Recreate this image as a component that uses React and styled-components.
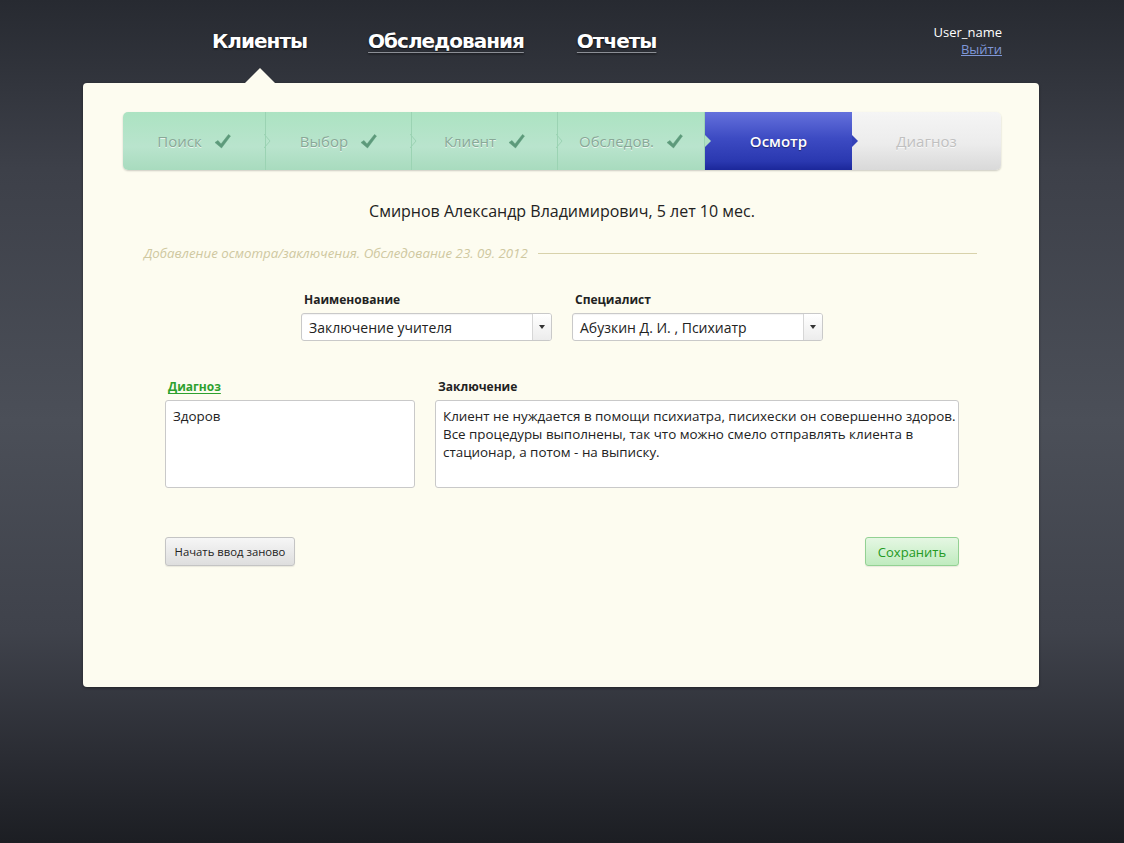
import React from 'react'
import styled, { createGlobalStyle } from 'styled-components'

const GlobalStyle = createGlobalStyle`
  html, body {
    margin: 0;
    padding: 0;
  }
  body {
    font-family: 'Open Sans', 'Noto Sans', sans-serif;
    background: #2a2d34;
  }
`

const Page = styled.div`
  width: 1124px;
  min-height: 843px;
  box-sizing: border-box;
  padding-left: 83px;
  background: linear-gradient(
    to bottom,
    #272a31 0%,
    #3d4049 20%,
    #4b4f58 50%,
    #3f424b 75%,
    #2a2c33 90%,
    #1c1e23 100%
  );
  display: flex;
  flex-direction: column;
`

const Header = styled.header`
  width: 956px;
  height: 83px;
  display: flex;
  align-items: flex-start;
`

const Nav = styled.nav`
  display: flex;
  padding: 29px 0 0 129px;
  flex: 1;
`

const NavLink = styled.a`
  font-family: 'DejaVu Sans', sans-serif;
  font-weight: bold;
  font-size: 20px;
  letter-spacing: -1px;
  margin-left: ${({ offset }) => offset || 0}px;
  color: #fff;
  text-shadow: 0 1px 2px rgba(0, 0, 0, 0.8);
  text-decoration: ${({ active }) => (active ? 'none' : 'underline')};
  text-decoration-color: #8c8f96;
  text-underline-offset: 4px;
  text-decoration-thickness: 1px;
  position: relative;
  cursor: pointer;
`

const Pointer = styled.span`
  position: absolute;
  left: 50%;
  top: 39px;
  margin-left: -15px;
  width: 0;
  height: 0;
  border-left: 15px solid transparent;
  border-right: 15px solid transparent;
  border-bottom: 15px solid #fdfcf0;
`

const User = styled.div`
  padding: 24px 37px 0 0;
  display: flex;
  flex-direction: column;
  align-items: flex-end;
  font-size: 13px;
  line-height: 17px;
  color: #fff;
`

const Logout = styled.a`
  color: #7f97d8;
  text-decoration: underline;
  cursor: pointer;
`

const Card = styled.main`
  width: 956px;
  height: 604px;
  box-sizing: border-box;
  background: #fdfcf0;
  border-radius: 4px;
  box-shadow: 0 1px 3px rgba(0, 0, 0, 0.4);
  padding: 29px 38px 0 40px;
  display: flex;
  flex-direction: column;
`

const Steps = styled.div`
  display: flex;
  height: 58px;
  border-radius: 5px;
  box-shadow: 0 1px 2px rgba(0, 0, 0, 0.2);
`

const stepBg = {
  done: 'linear-gradient(to bottom, #ace3c2 0%, #b9e4cd 60%, #a8dbbe 100%)',
  active: 'linear-gradient(to bottom, #6471dc 0%, #3d4bc3 45%, #2a38b0 85%, #1b279a 100%)',
  todo: 'linear-gradient(to bottom, #f5f5f5 0%, #ececec 55%, #d9d9d9 100%)',
}

const Step = styled.div`
  width: ${({ width }) => width}px;
  box-sizing: border-box;
  display: flex;
  align-items: center;
  justify-content: center;
  gap: 12px;
  position: relative;
  background: ${({ state }) => stepBg[state]};
  font-size: 15px;
  color: ${({ state }) =>
    state === 'done' ? '#89a897' : state === 'active' ? '#fff' : '#c0c0c0'};
  font-weight: ${({ state }) => (state === 'active' ? 600 : 400)};
  text-shadow: ${({ state }) =>
    state === 'active' ? '0 1px 1px rgba(0,0,0,0.4)' : '0 1px 0 rgba(255,255,255,0.7)'};
  border-right: ${({ state }) => (state === 'done' ? '1px solid #9bd3b3' : 'none')};

  &:first-child {
    border-radius: 5px 0 0 5px;
  }
  &:last-child {
    border-radius: 0 5px 5px 0;
  }
`

const Chevron = styled.svg`
  position: absolute;
  right: -6px;
  top: 22px;
  z-index: 2;
`

const Tip = styled.span`
  position: absolute;
  top: 23px;
  z-index: 2;
  width: 0;
  height: 0;
  border-top: 6px solid transparent;
  border-bottom: 6px solid transparent;
  border-left: 6px solid ${({ color }) => color};
  left: ${({ side }) => (side === 'left' ? '0' : '100%')};
`

const Check = () => (
  <svg width="17" height="15" viewBox="0 0 17 15">
    <path
      d="M1 8.5 L4 6.5 L7 10 L14.5 0.5 L16.5 2 L7.5 14 Z"
      fill="#5d9a7b"
      stroke="#5d9a7b"
      strokeWidth="0.5"
      strokeLinejoin="round"
    />
  </svg>
)

const Patient = styled.h1`
  margin: 29px 0 0;
  text-align: center;
  font-weight: 400;
  font-size: 16px;
  color: #222;
  line-height: 24px;
`

const Section = styled.div`
  display: flex;
  align-items: center;
  gap: 10px;
  margin: 21px 24px 0 21px;
`

const SectionTitle = styled.span`
  font-style: italic;
  font-size: 13.3px;
  color: #cfc8a0;
  white-space: nowrap;
`

const SectionLine = styled.span`
  flex: 1;
  height: 1px;
  background: #d8d2ab;
`

const SelectRow = styled.div`
  display: flex;
  justify-content: center;
  gap: 20px;
  margin-top: 29px;
`

const Field = styled.div`
  display: flex;
  flex-direction: column;
  gap: 5px;
  width: ${({ width }) => width}px;
`

const Label = styled.label`
  font-size: 12px;
  font-weight: 700;
  color: ${({ accent }) => (accent ? '#2ea12e' : '#222')};
  text-decoration: ${({ accent }) => (accent ? 'underline' : 'none')};
  text-underline-offset: 2px;
  padding-left: 3px;
  line-height: 17px;
`

const Select = styled.div`
  height: 28px;
  box-sizing: border-box;
  border: 1px solid #c9c9c9;
  border-radius: 3px;
  background: #fff;
  display: flex;
  align-items: stretch;
  font-size: 14px;
  color: #222;
  box-shadow: inset 0 1px 1px rgba(0, 0, 0, 0.05);
`

const SelectValue = styled.span`
  flex: 1;
  display: flex;
  align-items: center;
  padding-left: 7px;
`

const SelectArrow = styled.span`
  width: 18px;
  border-left: 1px solid #d6d6d6;
  background: linear-gradient(to bottom, #ffffff, #ececec);
  border-radius: 0 2px 2px 0;
  display: flex;
  align-items: center;
  justify-content: center;

  &::after {
    content: '';
    border-left: 3px solid transparent;
    border-right: 3px solid transparent;
    border-top: 4px solid #333;
  }
`

const TextRow = styled.div`
  display: flex;
  justify-content: center;
  gap: 20px;
  margin-top: 37px;
`

const TextBox = styled.div`
  height: 88px;
  box-sizing: border-box;
  border: 1px solid #c9c9c9;
  border-radius: 3px;
  background: #fff;
  padding: 6px 4px 0 7px;
  font-size: 13.4px;
  line-height: 18px;
  color: #222;
  white-space: nowrap;
`

const Actions = styled.div`
  display: flex;
  justify-content: space-between;
  margin: 49px 42px 0 42px;
`

const Button = styled.button`
  height: 29px;
  width: ${({ width }) => width}px;
  box-sizing: border-box;
  padding: 0;
  border-radius: 3px;
  font-family: inherit;
  cursor: pointer;
  border: 1px solid ${({ primary }) => (primary ? '#93d193' : '#c4c4c4')};
  background: ${({ primary }) =>
    primary
      ? 'linear-gradient(to bottom, #e5f7e3, #c0ebbf)'
      : 'linear-gradient(to bottom, #f6f6f6, #dedede)'};
  color: ${({ primary }) => (primary ? '#239a23' : '#222')};
  font-size: ${({ primary }) => (primary ? '13px' : '11.3px')};
  box-shadow: 0 1px 1px rgba(0, 0, 0, 0.08);
`

const steps = [
  { title: 'Поиск', state: 'done', width: 143 },
  { title: 'Выбор', state: 'done', width: 146 },
  { title: 'Клиент', state: 'done', width: 146 },
  { title: 'Обследов.', state: 'done', width: 147 },
  { title: 'Осмотр', state: 'active', width: 147 },
  { title: 'Диагноз', state: 'todo', width: 149 },
]

export default function App() {
  return (
    <>
      <GlobalStyle />
      <Page>
        <Header>
          <Nav>
            <NavLink active>
              Клиенты
              <Pointer />
            </NavLink>
            <NavLink offset={61}>Обследования</NavLink>
            <NavLink offset={53}>Отчеты</NavLink>
          </Nav>
          <User>
            <span>User_name</span>
            <Logout>Выйти</Logout>
          </User>
        </Header>

        <Card>
          <Steps>
            {steps.map((s, i) => (
              <Step key={s.title} state={s.state} width={s.width}>
                {s.title}
                {s.state === 'done' && <Check />}
                {s.state === 'done' && i < 3 && (
                  <Chevron width="7" height="14" viewBox="0 0 7 14">
                    <path d="M0 0 L6 7 L0 14" fill="none" stroke="#9bd3b3" strokeWidth="1" />
                  </Chevron>
                )}
                {s.state === 'active' && <Tip side="left" color="#b0e0c4" />}
                {s.state === 'active' && <Tip side="right" color="#3341b8" />}
              </Step>
            ))}
          </Steps>

          <Patient>Смирнов Александр Владимирович, 5 лет 10 мес.</Patient>

          <Section>
            <SectionTitle>Добавление осмотра/заключения. Обследование 23. 09. 2012</SectionTitle>
            <SectionLine />
          </Section>

          <SelectRow>
            <Field width={251}>
              <Label>Наименование</Label>
              <Select>
                <SelectValue>Заключение учителя</SelectValue>
                <SelectArrow />
              </Select>
            </Field>
            <Field width={251}>
              <Label>Специалист</Label>
              <Select>
                <SelectValue>Абузкин Д. И. , Психиатр</SelectValue>
                <SelectArrow />
              </Select>
            </Field>
          </SelectRow>

          <TextRow>
            <Field width={250}>
              <Label accent>Диагноз</Label>
              <TextBox>Здоров</TextBox>
            </Field>
            <Field width={524}>
              <Label>Заключение</Label>
              <TextBox>
                Клиент не нуждается в помощи психиатра, писихески он совершенно здоров.
                <br />
                Все процедуры выполнены, так что можно смело отправлять клиента в
                <br />
                стационар, а потом - на выписку.
              </TextBox>
            </Field>
          </TextRow>

          <Actions>
            <Button width={130}>Начать ввод заново</Button>
            <Button width={94} primary>
              Сохранить
            </Button>
          </Actions>
        </Card>
      </Page>
    </>
  )
}
